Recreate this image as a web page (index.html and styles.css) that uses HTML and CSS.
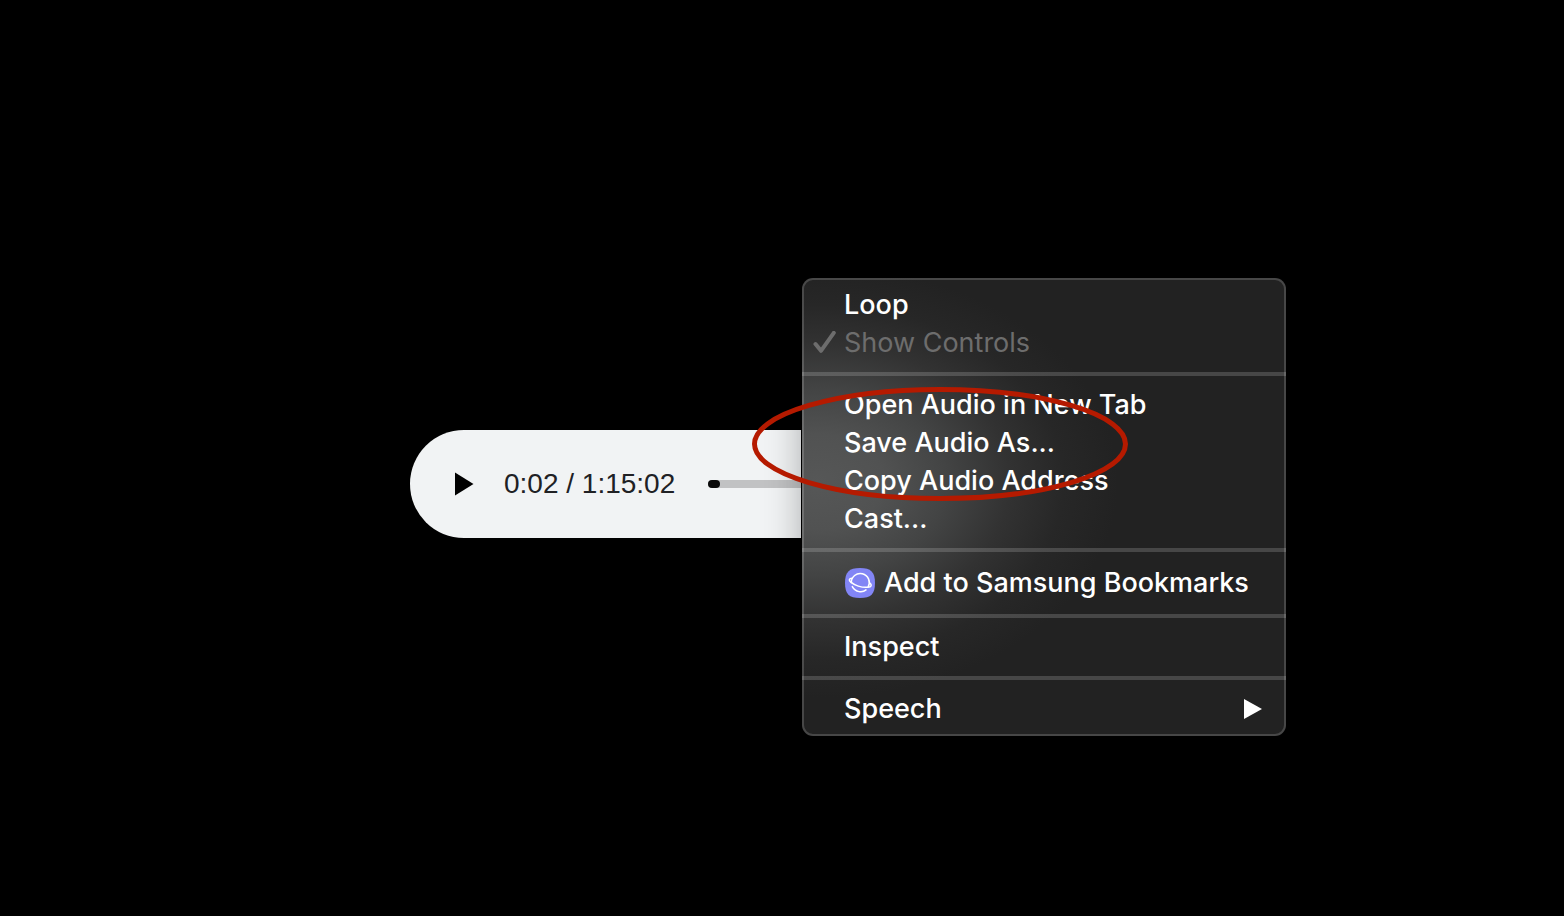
FILE: index.html
```html
<!DOCTYPE html>
<html lang="en">
<head>
<meta charset="utf-8">
<title>Audio</title>
<link rel="stylesheet" href="styles.css">
</head>
<body>
<main class="stage">
  <section class="player" aria-label="Audio player">
    <button class="play" type="button" aria-label="Play">
      <svg width="20" height="24" viewBox="0 0 20 24"><path d="M1 0.5 19.500 12 1 23.500Z" fill="#000"/></svg>
    </button>
    <span class="time">0:02 / 1:15:02</span>
    <input class="seek" type="range" min="0" max="4502" value="2" aria-label="Seek">

    <div class="menu" role="menu">
      <button class="item" type="button" role="menuitem">Loop</button>
      <button class="item checked" type="button" role="menuitemcheckbox" aria-checked="true" disabled>
        <svg class="check" width="24" height="24" viewBox="0 0 24 24"><path d="M3.500 13 9 19.800 21.800 1.800" fill="none" stroke="currentColor" stroke-width="4" stroke-linecap="round" stroke-linejoin="round"/></svg>
        Show Controls
      </button>
      <hr class="rule">
      <button class="item" type="button" role="menuitem">Open Audio in New Tab</button>
      <button class="item" type="button" role="menuitem">Save Audio As...</button>
      <button class="item" type="button" role="menuitem">Copy Audio Address</button>
      <button class="item" type="button" role="menuitem">Cast...</button>
      <hr class="rule">
      <button class="item with-icon" type="button" role="menuitem">
        <svg width="30" height="30" viewBox="0 0 30 30">
          <path d="M15 0C26 0 30 4 30 15S26 30 15 30 0 26 0 15 4 0 15 0Z" fill="#8285f5"/>
          <g fill="none" stroke="#fff" stroke-width="1.500" stroke-linecap="round">
            <path d="M6.300 14.800A9 9 0 1 1 23.200 18.800"/>
            <path d="M7.200 10.300C4 10.200 3.400 12.200 5.800 14.200 9.500 17.300 16.500 19.800 22.500 19.300 26.800 18.900 27.400 17 24.400 14.600"/>
            <path d="M7.300 18.600C10.500 24.500 17.500 25 21 21.900"/>
          </g>
        </svg>
        Add to Samsung Bookmarks
      </button>
      <hr class="rule">
      <button class="item" type="button" role="menuitem">Inspect</button>
      <hr class="rule">
      <button class="item submenu" type="button" role="menuitem" aria-haspopup="true">Speech
        <svg width="18" height="20" viewBox="0 0 18 20"><path d="M0 0 18 10 0 20Z" fill="#fff"/></svg>
      </button>
    </div>

    <svg class="marker" width="376" height="114" viewBox="0 0 376 114" aria-hidden="true"><ellipse cx="188" cy="57" rx="185.500" ry="54.500" fill="none" stroke="#b51a00" stroke-width="5"/></svg>
  </section>
</main>
</body>
</html>
```
FILE: styles.css
```css
* {
  box-sizing: border-box;
}

body {
  margin: 0;
  background: #000;
}

.stage {
  min-height: 100vh;
  display: flex;
  align-items: center;
  justify-content: center;
  padding: 52px 144px 0 0;
}

.player {
  position: relative;
  flex: 0 1 600px;
  display: flex;
  align-items: center;
  height: 108px;
  padding: 0 44px;
  border-radius: 54px;
  background: #f1f3f4;
}

button {
  margin: 0;
  border: 0;
  padding: 0;
  background: none;
  font: inherit;
  color: inherit;
}

.play {
  display: flex;
  margin-right: 30px;
}

.time {
  margin-right: 33px;
  font: 28px/36px "Liberation Sans", Arial, sans-serif;
  color: #202124;
  white-space: nowrap;
}

.seek {
  appearance: none;
  flex: 1;
  min-width: 0;
  height: 8px;
  margin: 0;
  border-radius: 4px;
  background: #c1c2c3;
}

.seek::-webkit-slider-thumb {
  appearance: none;
  width: 12px;
  height: 8px;
  border-radius: 4px;
  background: #0a0a0a;
}

.menu {
  position: absolute;
  left: 392px;
  top: -152px;
  width: 484px;
  padding: 6px 0;
  border: 2px solid rgba(255, 255, 255, 0.17);
  border-radius: 11px;
  background: radial-gradient(ellipse 300px 216px at 16px 204px, #565757 0%, #515252 22%, #434444 43%, #323232 64%, #272727 82%, #222 100%) border-box #222;
  box-shadow: 0 0 0 1px #000, 0 0 36px rgba(0, 0, 0, 0.3);
  font: 500 27px/38px Inter, "Noto Sans", sans-serif;
  color: #fff;
}

.item {
  display: flex;
  align-items: center;
  width: 100%;
  min-height: 38px;
  padding: 0 22px 0 40px;
  text-align: left;
  white-space: nowrap;
}

.checked {
  gap: 8px;
  padding-left: 8px;
  font-weight: 400;
  color: #6d6d6d;
}

.with-icon {
  gap: 9px;
  min-height: 42px;
  padding-left: 41px;
}

.submenu {
  justify-content: space-between;
}

.rule {
  height: 4px;
  margin: 10px -2px;
  border: 0;
  background: rgba(255, 255, 255, 0.17);
}

.marker {
  position: absolute;
  left: 342px;
  top: -43px;
  pointer-events: none;
}
```
